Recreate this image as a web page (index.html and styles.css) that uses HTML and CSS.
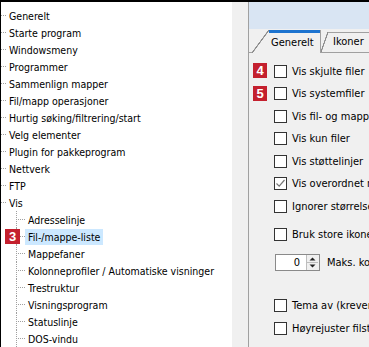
FILE: index.html
```html
<!DOCTYPE html>
<html lang="no">
<head>
<meta charset="utf-8">
<title>Innstillinger</title>
<link rel="stylesheet" href="styles.css">
</head>
<body>
<div class="window">
  <div class="tree">
    <div class="node top"><span class="label">Generelt</span></div>
    <div class="node top"><span class="label">Starte program</span></div>
    <div class="node top"><span class="label">Windowsmeny</span></div>
    <div class="node top"><span class="label">Programmer</span></div>
    <div class="node top"><span class="label">Sammenlign mapper</span></div>
    <div class="node top"><span class="label">Fil/mapp operasjoner</span></div>
    <div class="node top"><span class="label">Hurtig søking/filtrering/start</span></div>
    <div class="node top"><span class="label">Velg elementer</span></div>
    <div class="node top"><span class="label">Plugin for pakkeprogram</span></div>
    <div class="node top"><span class="label">Nettverk</span></div>
    <div class="node top"><span class="label">FTP</span></div>
    <div class="node top"><span class="label">Vis</span></div>
    <div class="node child"><span class="label">Adresselinje</span></div>
    <div class="node child selected"><span class="badge badge-tree">3</span><span class="label">Fil-/mappe-liste</span></div>
    <div class="node child"><span class="label">Mappefaner</span></div>
    <div class="node child"><span class="label">Kolonneprofiler / Automatiske visninger</span></div>
    <div class="node child"><span class="label">Trestruktur</span></div>
    <div class="node child"><span class="label">Visningsprogram</span></div>
    <div class="node child"><span class="label">Statuslinje</span></div>
    <div class="node child"><span class="label">DOS-vindu</span></div>
  </div>
  <div class="gutter"></div>
  <div class="pane">
    <div class="banner"></div>
    <div class="tabs">
      <div class="tab active">Generelt</div>
      <div class="tab">Ikoner</div>
    </div>
    <div class="sheet">
      <div class="opt"><span class="badge badge-opt">4</span><span class="box"></span><span class="text">Vis skjulte filer</span></div>
      <div class="opt"><span class="badge badge-opt">5</span><span class="box"></span><span class="text">Vis systemfiler</span></div>
      <div class="opt"><span class="box"></span><span class="text">Vis fil- og mappestørrelser</span></div>
      <div class="opt"><span class="box"></span><span class="text">Vis kun filer</span></div>
      <div class="opt"><span class="box"></span><span class="text">Vis støttelinjer</span></div>
      <div class="opt"><span class="box"><svg class="check" width="11" height="11" viewBox="0 0 11 11"><polyline points="1.5,5.5 4.2,8.2 9.5,2" fill="none" stroke="#777" stroke-width="1.2"/></svg></span><span class="text">Vis overordnet mappe</span></div>
      <div class="opt"><span class="box"></span><span class="text">Ignorer størrelsesendringer</span></div>
      <div class="opt opt-gap"><span class="box"></span><span class="text">Bruk store ikoner</span></div>
      <div class="spin-row">
        <div class="spin">
          <span class="spin-val">0</span>
          <span class="spin-btns"><svg width="11" height="15" viewBox="0 0 11 15"><polygon points="2.5,5.5 5.5,2.5 8.5,5.5" fill="#222"/><line x1="0" y1="7.5" x2="11" y2="7.5" stroke="#bdbdbd"/><polygon points="2.5,9.5 5.5,12.5 8.5,9.5" fill="#222"/></svg></span>
        </div>
        <span class="text">Maks. kolonnebredde</span>
      </div>
      <div class="opt opt-gap2"><span class="box"></span><span class="text">Tema av (krever omstart)</span></div>
      <div class="opt"><span class="box"></span><span class="text">Høyrejuster filstørrelser</span></div>
    </div>
  </div>
</div>
</body>
</html>
```
FILE: styles.css
```css
html, body {
  margin: 0;
  padding: 0;
}
body {
  width: 369px;
  height: 347px;
  overflow: hidden;
  background: #f0f0f0;
  font-family: "DejaVu Sans Condensed", "DejaVu Sans", sans-serif;
  font-stretch: condensed;
  font-size: 10.5px;
  color: #000;
}
.window {
  display: flex;
  height: 347px;
  box-sizing: border-box;
  border-top: 2px solid #000;
  border-left: 1px solid #000;
}
.tree {
  width: 231px;
  flex: none;
  background: #fff;
  padding-top: 5px;
  overflow: hidden;
  white-space: nowrap;
}
.node {
  height: 17px;
  display: flex;
  align-items: center;
  position: relative;
}
.node.top::before {
  content: "";
  flex: none;
  width: 5px;
  height: 0;
  border-top: 1px dotted #a0a0a0;
}
.node.top .label {
  padding-left: 3px;
  padding-right: 0;
}
.node.child {
  padding-left: 15px;
}
.node.child::before {
  content: "";
  flex: none;
  align-self: stretch;
  width: 8px;
  border-left: 1px dotted #a0a0a0;
  background: repeating-linear-gradient(to right, #a0a0a0 0 1px, transparent 1px 2px) 1px 8px / 100% 1px no-repeat;
}
.label {
  height: 16px;
  line-height: 16px;
  padding: 0 3px;
}
.selected .label {
  background: #cce8ff;
}
.badge {
  position: absolute;
  width: 15px;
  height: 15px;
  background: #c4202e;
  color: #fff;
  font-family: "Liberation Sans", Arial, sans-serif;
  font-weight: bold;
  font-size: 13px;
  line-height: 15px;
  text-align: center;
}
.badge-tree {
  left: 4px;
  top: 1px;
}
.gutter {
  width: 16px;
  flex: none;
}
.pane {
  flex: 1;
  min-width: 0;
  border-left: 1px solid #a0a0a0;
  display: flex;
  flex-direction: column;
  overflow: hidden;
  white-space: nowrap;
  font-size: 11px;
}
.banner {
  height: 27px;
  flex: none;
  background: #d9e5f3;
}
.tabs {
  height: 23px;
  flex: none;
  display: flex;
  align-items: flex-end;
  border-bottom: 1px solid #a0a0a0;
  padding-left: 3px;
}
.tab {
  box-sizing: border-box;
  line-height: 20px;
}
.tab.active {
  width: 69px;
  height: 23px;
  margin-bottom: -1px;
  padding: 3px 0 0 19px;
  border-right: 1px solid #a0a0a0;
  background:
    linear-gradient(#1c73cf, #1c73cf) 17px 0 / 100% 3px no-repeat,
    linear-gradient(to bottom right, transparent calc(50% - 0.8px), #8c8c8c calc(50% - 0.4px), #8c8c8c calc(50% + 0.4px), transparent calc(50% + 0.8px)) 0 0 / 17px 100% no-repeat,
    #f0f0f0;
}
.tab:not(.active) {
  height: 20px;
  flex: 1;
  padding-left: 12px;
  background:
    linear-gradient(#a0a0a0, #a0a0a0) 7px 0 / 100% 1px no-repeat,
    linear-gradient(to bottom right, transparent calc(50% - 0.8px), #8c8c8c calc(50% - 0.4px), #8c8c8c calc(50% + 0.4px), transparent calc(50% + 0.8px)) 0 0 / 7px 100% no-repeat,
    #f0f0f0;
}
.sheet {
  padding-top: 7px;
  display: flex;
  flex-direction: column;
}
.opt {
  height: 22.5px;
  flex: none;
  display: flex;
  align-items: center;
  padding-left: 25px;
  position: relative;
}
.badge-opt {
  left: 4px;
  top: calc(50% - 8px);
  width: 14px;
}
.box {
  width: 13px;
  height: 13px;
  box-sizing: border-box;
  border: 1px solid #333;
  background: #fff;
  margin-right: 5px;
  flex: none;
  display: flex;
  align-items: center;
  justify-content: center;
}
.check {
  display: block;
}
.opt-gap {
  margin-top: 5.5px;
}
.spin-row {
  margin-top: 8px;
  height: 17px;
  flex: none;
  display: flex;
  align-items: center;
  padding-left: 26px;
}
.spin {
  width: 45px;
  height: 17px;
  box-sizing: border-box;
  border: 1px solid #8a8a8a;
  background: #fff;
  display: flex;
  margin-right: 7px;
  flex: none;
}
.spin-val {
  flex: 1;
  text-align: right;
  padding-right: 6px;
  line-height: 15px;
}
.spin-btns {
  width: 12px;
  border-left: 1px solid #bdbdbd;
  background: #f0f0f0;
  display: flex;
}
.spin-btns svg {
  display: block;
}
.opt-gap2 {
  margin-top: 24px;
}
```
